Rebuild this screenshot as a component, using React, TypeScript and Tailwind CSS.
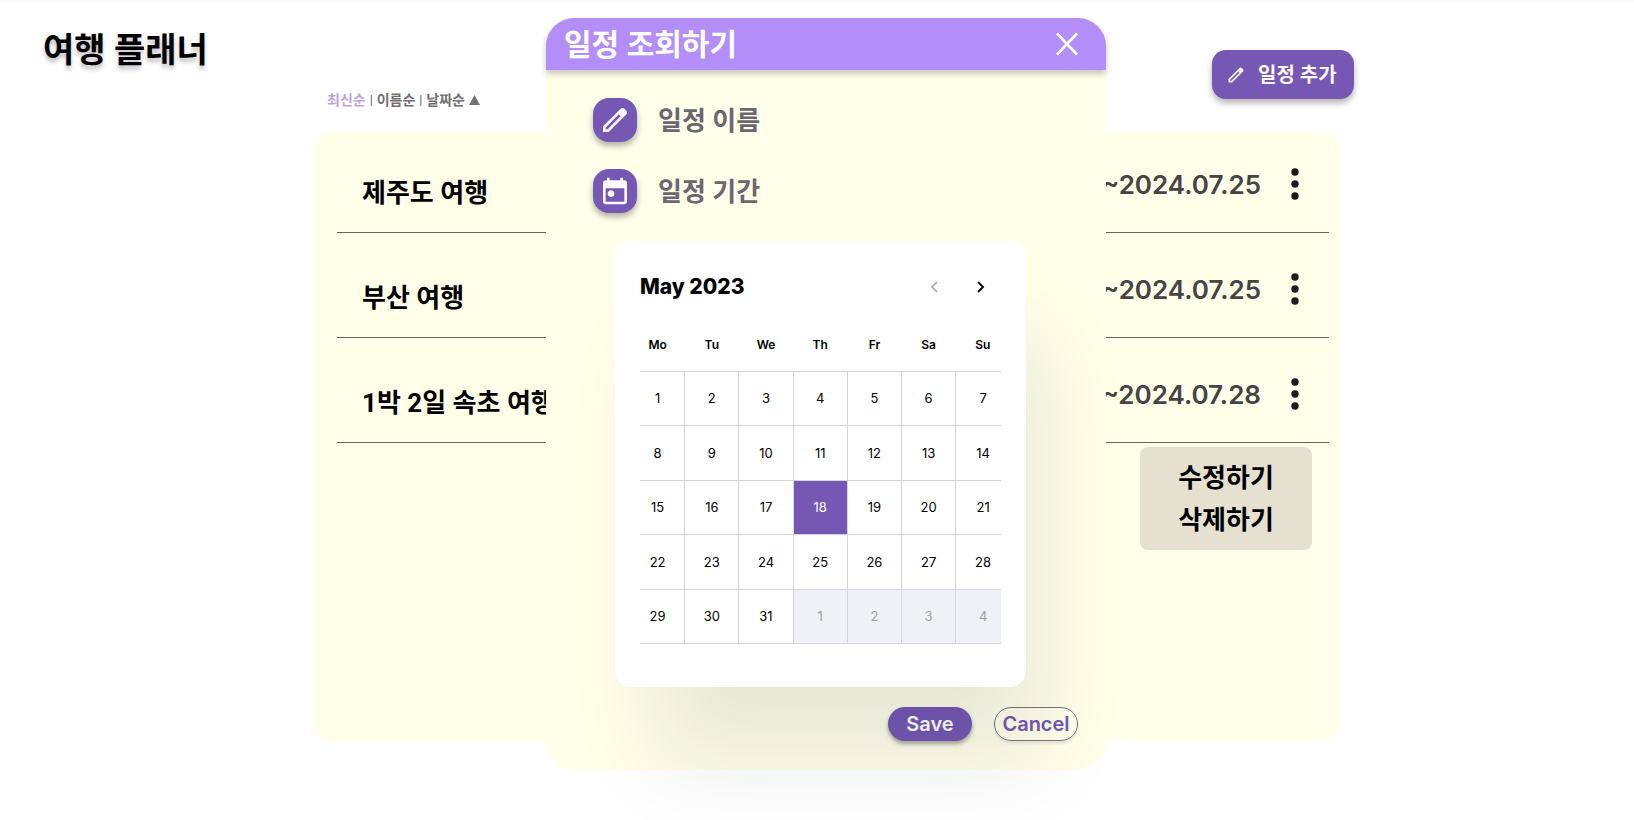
import { useState } from "react";

const trips = [
  { name: "제주도 여행", end: "2024.07.25" },
  { name: "부산 여행", end: "2024.07.25" },
  { name: "1박 2일 속초 여행", end: "2024.07.28" },
];

const weekdays = ["Mo", "Tu", "We", "Th", "Fr", "Sa", "Su"];

const weeks = Array.from({ length: 5 }, (_, w) =>
  Array.from({ length: 7 }, (_, d) => {
    const n = w * 7 + d + 1;
    return n > 31 ? { day: n - 31, next: true } : { day: n, next: false };
  }),
);

function EditIcon({ className }: { className: string }) {
  return (
    <svg viewBox="0 0 24 24" fill="currentColor" className={className} aria-hidden="true">
      <path d="M5 19H6.425L16.2 9.225L14.775 7.8L5 17.575V19ZM3 21V16.75L16.2 3.575C16.4 3.392 16.621 3.25 16.863 3.15C17.104 3.05 17.358 3 17.625 3C17.892 3 18.15 3.05 18.4 3.15C18.65 3.25 18.867 3.4 19.05 3.6L20.425 5C20.625 5.183 20.771 5.4 20.863 5.65C20.954 5.9 21 6.15 21 6.4C21 6.667 20.954 6.921 20.863 7.163C20.771 7.404 20.625 7.625 20.425 7.825L7.25 21H3Z" />
    </svg>
  );
}

function TodayIcon({ className }: { className: string }) {
  return (
    <svg viewBox="0 0 24 24" fill="currentColor" className={className} aria-hidden="true">
      <path d="M9 16.5C8.3 16.5 7.708 16.258 7.225 15.775C6.742 15.292 6.5 14.7 6.5 14C6.5 13.3 6.742 12.708 7.225 12.225C7.708 11.742 8.3 11.5 9 11.5C9.7 11.5 10.292 11.742 10.775 12.225C11.258 12.708 11.5 13.3 11.5 14C11.5 14.7 11.258 15.292 10.775 15.775C10.292 16.258 9.7 16.5 9 16.5ZM5 22C4.45 22 3.979 21.804 3.588 21.413C3.196 21.021 3 20.55 3 20V6C3 5.45 3.196 4.979 3.588 4.588C3.979 4.196 4.45 4 5 4H6V2H8V4H16V2H18V4H19C19.55 4 20.021 4.196 20.413 4.588C20.804 4.979 21 5.45 21 6V20C21 20.55 20.804 21.021 20.413 21.413C20.021 21.804 19.55 22 19 22H5ZM5 20H19V10H5V20Z" />
    </svg>
  );
}

function SortBar() {
  return (
    <nav className="flex items-center gap-1 text-sm font-bold text-[#707070]">
      <button type="button" className="text-[#b9a6dd]">최신순</button>
      <span className="text-xs">|</span>
      <button type="button">이름순</button>
      <span className="text-xs">|</span>
      <button type="button" className="flex items-center gap-1">
        날짜순
        <svg viewBox="0 0 11 10" fill="#757575" className="h-[10px] w-[11px]" aria-hidden="true">
          <path d="M5.5 0L11 10H0Z" />
        </svg>
      </button>
    </nav>
  );
}

function TripList() {
  return (
    <section className="h-[609px] rounded-[18px] bg-[#ffffea] pr-[11px] pl-6">
      <ul>
        {trips.map((trip) => (
          <li
            key={trip.name}
            className="flex h-[105px] items-end border-b border-[#666660] pr-6 pb-[23px] pl-[25px] text-[26px] leading-8 first:h-[101px]"
          >
            <span className="font-bold text-black">{trip.name}</span>
            <span className="mb-2 ml-auto font-['Inter'] font-semibold text-[#444444]">
              ~{trip.end}
            </span>
            <button type="button" aria-label="메뉴" className="mb-[5px] ml-6 flex h-10 w-5 items-center justify-center text-[#1c1b1f]">
              <svg viewBox="0 0 8 32" fill="currentColor" className="h-8 w-2">
                <circle cx="4" cy="4" r="3.7" />
                <circle cx="4" cy="16" r="3.7" />
                <circle cx="4" cy="28" r="3.7" />
              </svg>
            </button>
          </li>
        ))}
      </ul>
      <div className="mt-1 mr-[17px] ml-auto flex h-[103px] w-[172px] flex-col items-center justify-center gap-[10px] rounded-lg bg-[#e6e0d0] text-[26px] leading-8 font-bold text-black">
        <button type="button">수정하기</button>
        <button type="button">삭제하기</button>
      </div>
    </section>
  );
}

function Calendar() {
  const [selected, setSelected] = useState(18);
  return (
    <div className="relative z-10 h-[446px] w-[411px] rounded-2xl bg-white px-[25px] pt-[30px] font-['Inter'] shadow-[28px_84px_90px_-12px_rgba(15,28,50,0.1)]">
      <div className="flex items-center">
        <h3 className="text-[21px] leading-8 font-extrabold text-black">May 2023</h3>
        <button type="button" aria-label="Previous month" className="ml-auto flex h-8 w-8 items-center justify-center text-[#a8a8a8]">
          <svg viewBox="0 0 8 12" fill="none" stroke="currentColor" strokeWidth="1.7" className="h-3 w-2">
            <path d="M7 1L2 6L7 11" />
          </svg>
        </button>
        <button type="button" aria-label="Next month" className="mr-1 ml-[15px] flex h-8 w-8 items-center justify-center text-black">
          <svg viewBox="0 0 8 12" fill="none" stroke="currentColor" strokeWidth="1.9" className="h-3 w-2">
            <path d="M1 1L6 6L1 11" />
          </svg>
        </button>
      </div>
      <div className="mt-6 overflow-hidden">
        <table className="-mx-[10px] h-[317px] w-[380px] table-fixed border-collapse text-center text-[13px] leading-4 text-black">
          <thead>
            <tr className="h-11 align-top text-xs">
              {weekdays.map((d) => (
                <th key={d} scope="col" className="pt-[10px] font-semibold">
                  {d}
                </th>
              ))}
            </tr>
          </thead>
          <tbody>
            {weeks.map((week, w) => (
              <tr key={w} className="h-[54px] border-y border-[#d5d4df]">
                {week.map(({ day, next }) => (
                  <td
                    key={day}
                    className={`border-l border-[#d5d4df] p-0 ${
                      next
                        ? "bg-[#f0f1f5] text-[#a0a0a0]"
                        : day === selected
                          ? "bg-[#7458b3] text-white"
                          : ""
                    }`}
                  >
                    <button type="button" disabled={next} onClick={() => setSelected(day)} className="h-[53px] w-full">
                      {day}
                    </button>
                  </td>
                ))}
              </tr>
            ))}
          </tbody>
        </table>
      </div>
    </div>
  );
}

function ScheduleDialog() {
  return (
    <div
      role="dialog"
      aria-labelledby="dialog-title"
      className="absolute top-4 left-1/2 -ml-[271px] flex w-[560px] flex-col rounded-[28px] bg-[#ffffea] pb-[29px]"
    >
      <header className="flex h-[52px] items-center justify-between rounded-t-[28px] bg-[#b48ef8] pr-[27px] pl-[18px] text-white shadow-[0_4px_6px_rgba(0,0,0,0.22)]">
        <h2 id="dialog-title" className="pt-[2px] text-[30px] leading-10 font-bold">일정 조회하기</h2>
        <button type="button" aria-label="닫기">
          <svg viewBox="0 0 24 24" fill="none" stroke="currentColor" strokeWidth="2.6" className="size-6">
            <path d="M2 1.5L22 22.5M22 1.5L2 22.5" />
          </svg>
        </button>
      </header>
      <div className="mt-7 ml-[47px] flex flex-col gap-[27px] text-[26px] leading-8 font-bold text-[#6b6670]">
        <div className="flex items-center gap-[21px]">
          <span className="flex size-11 items-center justify-center rounded-2xl bg-[#7458b3] text-[#fdf7ff] shadow-[0_4px_6px_rgba(0,0,0,0.3)]">
            <EditIcon className="size-8" />
          </span>
          <span className="pt-[2px]">일정 이름</span>
        </div>
        <div className="flex items-center gap-[21px]">
          <span className="flex size-11 items-center justify-center rounded-2xl bg-[#7458b3] text-[#fdf7ff] shadow-[0_4px_6px_rgba(0,0,0,0.3)]">
            <TodayIcon className="size-8" />
          </span>
          <span className="pt-[2px]">일정 기간</span>
        </div>
      </div>
      <div className="mt-7 ml-[69px]">
        <Calendar />
      </div>
      <div className="mt-5 mr-7 flex justify-end gap-[22px] font-['Inter'] text-xl leading-8 font-semibold">
        <button type="button" className="h-[34px] w-[84px] rounded-full bg-[#7458b3] text-white shadow-[0_3px_4px_rgba(0,0,0,0.35)]">
          Save
        </button>
        <button type="button" className="h-[34px] w-[84px] rounded-full border border-[#79747e] text-[#7458b3] shadow-[0_3px_3px_rgba(0,0,0,0.08)]">
          Cancel
        </button>
      </div>
    </div>
  );
}

export default function App() {
  return (
    <div className="relative min-h-screen overflow-hidden border-t-2 border-[#f9f9f9] bg-white font-['Roboto','Noto_Sans_CJK_KR',sans-serif]">
      <div className="flex h-[130px] items-start">
        <h1 className="mt-6 ml-[43px] w-[270px] text-[34px] leading-12 font-bold text-black [text-shadow:0_4px_4px_rgba(0,0,0,0.25)]">
          여행 플래너
        </h1>
        <div className="mt-[88px] ml-[14px]">
          <SortBar />
        </div>
        <button
          type="button"
          className="mt-12 mr-[280px] ml-auto flex h-[49px] w-[142px] items-center gap-3 rounded-[14px] bg-[#7458b3] pl-[14px] text-xl font-bold text-[#fdf7ff] shadow-[0_4px_6px_rgba(0,0,0,0.3)]"
        >
          <EditIcon className="size-5" />
          일정 추가
        </button>
      </div>
      <div className="mr-[294px] ml-[313px]">
        <TripList />
      </div>
      <ScheduleDialog />
    </div>
  );
}
